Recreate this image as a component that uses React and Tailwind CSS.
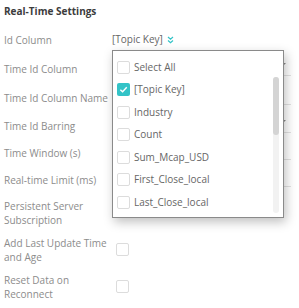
import React from "react";

const items = [
  { label: "Select All", checked: false },
  { label: "[Topic Key]", checked: true },
  { label: "Industry", checked: false },
  { label: "Count", checked: false },
  { label: "Sum_Mcap_USD", checked: false },
  { label: "First_Close_local", checked: false },
  { label: "Last_Close_local", checked: false },
];

function Box({ checked }) {
  if (checked) {
    return (
      <div className="w-[13px] h-[13px] rounded-[2px] bg-[#33c3c7] flex items-center justify-center shrink-0">
        <svg width="9" height="9" viewBox="0 0 10 10">
          <path d="M1.5 5.2 L4 7.5 L8.6 2.6" fill="none" stroke="#fff" strokeWidth="1.6" />
        </svg>
      </div>
    );
  }
  return <div className="w-[13px] h-[13px] rounded-[2px] border border-[#dcdcdc] bg-white shrink-0" />;
}

function Row({ h, label, children }) {
  return (
    <div className={`flex items-center ${h}`}>
      <div className="w-[108px] shrink-0 text-[10px] leading-[14px] text-[#8c8c8c]">{label}</div>
      <div className="flex-1 flex items-center">{children}</div>
    </div>
  );
}

function Field({ select }) {
  return (
    <div className="relative w-[179px] h-[14px] border-b border-[#e2e2e2]">
      {select && (
        <div className="absolute right-[5px] top-[1px] w-0 h-0 border-l-[3px] border-r-[3px] border-t-[3px] border-l-transparent border-r-transparent border-t-[#888]" />
      )}
    </div>
  );
}

export default function App() {
  return (
    <div className="relative w-[299px] h-[308px] bg-white px-[4px] font-['Open_Sans',sans-serif]">
      <div className="h-[25px] pt-[4px] text-[10px] leading-[14px] font-bold text-[#3c3c3c]">Real-Time Settings</div>
      <Row h="h-[29px]" label="Id Column">
        <span className="text-[10px] text-[#666]">[Topic Key]</span>
        <svg className="ml-[4px]" width="7" height="8" viewBox="0 0 7 8">
          <path d="M1 1 L3.5 3.3 L6 1 M1 4.5 L3.5 6.8 L6 4.5" fill="none" stroke="#33c3c7" strokeWidth="1.2" />
        </svg>
      </Row>
      <Row h="h-[30px]" label="Time Id Column"><Field select /></Row>
      <Row h="h-[28px]" label="Time Id Column Name"><Field /></Row>
      <Row h="h-[27px]" label="Time Id Barring"><Field select /></Row>
      <Row h="h-[27px]" label="Time Window (s)"><Field /></Row>
      <Row h="h-[28px]" label="Real-time Limit (ms)"><Field /></Row>
      <Row h="h-[37px]" label="Persistent Server Subscription" />
      <Row h="h-[37px]" label="Add Last Update Time and Age"><div className="ml-[4px]"><Box /></div></Row>
      <Row h="h-[37px]" label="Reset Data on Reconnect"><div className="ml-[4px]"><Box /></div></Row>

      <div className="absolute top-[50px] left-[112px] w-[172px] h-[168px] bg-white border border-[#8a8a8a] shadow-[2px_4px_10px_rgba(0,0,0,0.25)] pt-[5px] pl-[4px]">
        {items.map((it) => (
          <div key={it.label} className="flex items-center gap-[4px] h-[22.5px]">
            <Box checked={it.checked} />
            <span className="text-[10px] text-[#666]">{it.label}</span>
          </div>
        ))}
        <div className="absolute right-[4px] top-[26px] bottom-[4px] w-[6px] rounded-full bg-[#f2f2f2]">
          <div className="h-[58px] w-full rounded-full bg-[#d4d4d4]" />
        </div>
      </div>
    </div>
  );
}
